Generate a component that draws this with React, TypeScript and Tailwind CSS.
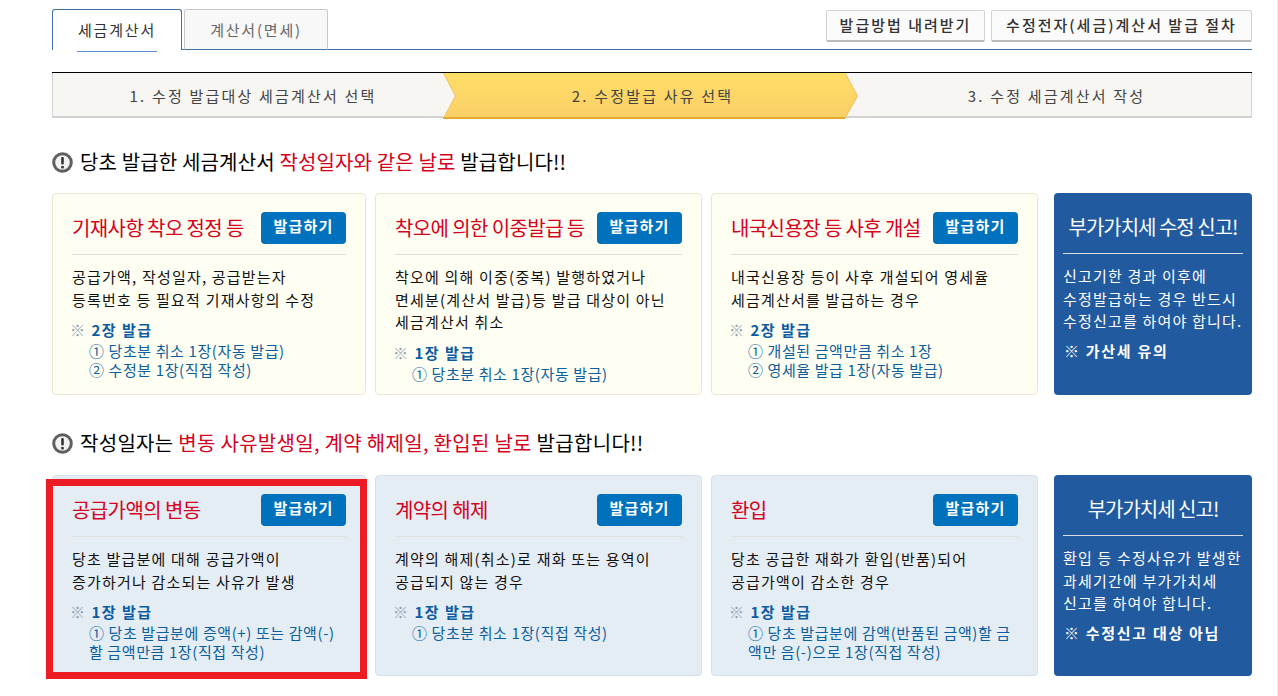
import React from "react";

type Card = {
  title: string;
  desc: string[];
  count: string;
  lines: string[];
};

const topCards: Card[] = [
  {
    title: "기재사항 착오 정정 등",
    desc: ["공급가액, 작성일자, 공급받는자", "등록번호 등 필요적 기재사항의 수정"],
    count: "2장 발급",
    lines: ["① 당초분 취소 1장(자동 발급)", "② 수정분 1장(직접 작성)"],
  },
  {
    title: "착오에 의한 이중발급 등",
    desc: [
      "착오에 의해 이중(중복) 발행하였거나",
      "면세분(계산서 발급)등 발급 대상이 아닌",
      "세금계산서 취소",
    ],
    count: "1장 발급",
    lines: ["① 당초분 취소 1장(자동 발급)"],
  },
  {
    title: "내국신용장 등 사후 개설",
    desc: ["내국신용장 등이 사후 개설되어 영세율", "세금계산서를 발급하는 경우"],
    count: "2장 발급",
    lines: ["① 개설된 금액만큼 취소 1장", "② 영세율 발급 1장(자동 발급)"],
  },
];

const bottomCards: Card[] = [
  {
    title: "공급가액의 변동",
    desc: ["당초 발급분에 대해 공급가액이", "증가하거나 감소되는 사유가 발생"],
    count: "1장 발급",
    lines: ["① 당초 발급분에 증액(+) 또는 감액(-)", "할 금액만큼 1장(직접 작성)"],
  },
  {
    title: "계약의 해제",
    desc: ["계약의 해제(취소)로 재화 또는 용역이", "공급되지 않는 경우"],
    count: "1장 발급",
    lines: ["① 당초분 취소 1장(직접 작성)"],
  },
  {
    title: "환입",
    desc: ["당초 공급한 재화가 환입(반품)되어", "공급가액이 감소한 경우"],
    count: "1장 발급",
    lines: ["① 당초 발급분에 감액(반품된 금액)할 금", "액만 음(-)으로 1장(직접 작성)"],
  },
];

function NoticeIcon() {
  return (
    <svg className="mr-[7px] shrink-0" width="21" height="21" viewBox="0 0 21 21">
      <circle cx="10.5" cy="10.5" r="8.8" fill="#f2f2f2" stroke="#5f5f5f" strokeWidth="3" />
      <rect x="9.2" y="5" width="2.6" height="7.5" rx="1" fill="#333333" />
      <rect x="9.2" y="14" width="2.6" height="2.4" fill="#333333" />
    </svg>
  );
}

function ReasonCard({ card, tone }: { card: Card; tone: "yellow" | "blue" }) {
  return (
    <section
      className={`h-full whitespace-nowrap rounded-[4px] border px-[19px] pt-[18px] ${
        tone === "yellow"
          ? "border-[#ebe7cf] bg-[#fffef2]"
          : "border-[#d5e1ed] bg-[#e4ecf4]"
      }`}
    >
      <div className="flex h-[43px] items-start justify-between border-b border-[#e0e0dc]">
        <h3 className="pt-[3px] text-[20px] leading-[26px] tracking-[-0.6px] text-[#d6001c]">
          {card.title}
        </h3>
        <button
          className="h-[32px] w-[85px] rounded-[4px] bg-[#0071bc] pb-[4px] text-[15px] font-bold tracking-[1.2px] text-white"
          type="button"
        >
          발급하기
        </button>
      </div>
      <div className="mt-[11px] text-[15px] leading-[22.5px] tracking-[1.2px] text-[#111111]">
        {card.desc.map((line) => (
          <p key={line}>{line}</p>
        ))}
      </div>
      <p className="-ml-[2px] mt-[8px] text-[15px] font-bold leading-[22px] tracking-[1.5px] text-[#0b5ca3]">
        <span className="font-normal text-[#8fa3b5]">※</span> {card.count}
      </p>
      <div className="pl-[17px] text-[15px] leading-[19px] tracking-[0.6px] text-[#0b5f9e]">
        {card.lines.map((line) => (
          <p key={line}>{line}</p>
        ))}
      </div>
    </section>
  );
}

function SideCard({ title, desc, note }: { title: string; desc: string[]; note: string }) {
  return (
    <aside className="h-full whitespace-nowrap rounded-[4px] bg-[#225a9f] px-[9px] pt-[19px] text-white">
      <h3 className="border-b border-[#d8dde6] pb-[11px] text-center text-[20px] leading-[30px] tracking-[-1px]">
        {title}
      </h3>
      <div className="mt-[11px] text-[15px] leading-[22.5px] tracking-[1.2px]">
        {desc.map((line) => (
          <p key={line}>{line}</p>
        ))}
      </div>
      <p className="mt-[7px] pl-[1px] text-[15px] font-bold leading-[22px] tracking-[1.7px]">{note}</p>
    </aside>
  );
}

function Step({ label }: { label: string }) {
  return <span className="relative text-[15px] tracking-[2.2px] text-[#444444]">{label}</span>;
}

export default function App() {
  return (
    <div
      className="relative h-[696px] w-[1278px] overflow-hidden border-r border-r-[#e8e8e8] bg-white"
      style={{ fontFamily: '"Noto Sans CJK KR", "Liberation Sans", sans-serif' }}
    >
      <div className="mx-[52px] w-[1200px] pt-[9px]">
        <div className="flex h-[41px] justify-between border-b border-[#3f72a8]">
          <div className="flex gap-[2px]">
            <div className="z-10 flex h-[41px] w-[130px] items-start justify-center rounded-t-[3px] border border-b-0 border-[#3f72a8] bg-white pt-[9px]">
              <span className="border-b border-[#5f90c8] px-[1px] pb-[10px] text-[15px] leading-[22px] tracking-[1.8px] text-[#333333]">
                세금계산서
              </span>
            </div>
            <div className="flex h-[41px] w-[144px] items-start justify-center rounded-t-[3px] border border-[#c8c8c8] border-b-[#3f72a8] bg-[#f8f8f8] pt-[9px]">
              <span className="text-[15px] leading-[22px] tracking-[1.8px] text-[#666666]">계산서(면세)</span>
            </div>
          </div>
          <div className="flex gap-[6px] pt-[1px]">
            <button
              className="h-[32px] w-[159px] rounded-[2px] border border-[#d4d4d4] border-b-2 border-b-[#bbbbbb] bg-[#fbfbfb] text-[15px] font-medium tracking-[2px] text-[#333333]"
              type="button"
            >
              발급방법 내려받기
            </button>
            <button
              className="h-[32px] w-[261px] rounded-[2px] border border-[#d4d4d4] border-b-2 border-b-[#bbbbbb] bg-[#fbfbfb] text-[15px] font-medium tracking-[2px] text-[#333333]"
              type="button"
            >
              수정전자(세금)계산서 발급 절차
            </button>
          </div>
        </div>

        <div className="mt-[22px] flex h-[46px] border-t border-t-black">
          <div className="flex h-[45px] w-[391px] items-center justify-center border-b-2 border-l border-[#d2d2d2] bg-[#f7f6f2] pl-[10px] pt-[3px]">
            <Step label="1. 수정 발급대상 세금계산서 선택" />
          </div>
          <div className="relative z-10 flex h-[46px] w-[415px] items-center justify-center pl-[4px]">
            <svg className="absolute inset-0" width="415" height="46" viewBox="0 0 415 46">
              <defs>
                <linearGradient id="stepFill" x1="0" y1="0" x2="0" y2="1">
                  <stop offset="0" stopColor="#ffde66" />
                  <stop offset="1" stopColor="#f9cf68" />
                </linearGradient>
              </defs>
              <polygon points="0,0 13,23 0,44" fill="#f7f6f2" />
              <polygon points="0.5,0 402,0 414.5,23 402,45.5 0.5,45.5 12.5,23" fill="url(#stepFill)" />
              <polyline points="0.5,0 12.5,23 0.5,45" fill="none" stroke="#eebf58" strokeWidth="1" />
              <polyline points="402,0 414.5,23 402,45" fill="none" stroke="#eebf58" strokeWidth="1" />
              <line x1="0" y1="45" x2="402" y2="45" stroke="#e3aa2c" strokeWidth="2" />
            </svg>
            <Step label="2. 수정발급 사유 선택" />
          </div>
          <div className="-ml-[12px] flex h-[45px] flex-1 items-center justify-center border-b-2 border-r border-[#d2d2d2] bg-[#f7f6f2] pl-[16px] pt-[3px]">
            <Step label="3. 수정 세금계산서 작성" />
          </div>
        </div>

        <h2 className="mt-[29px] flex h-[30px] items-center whitespace-nowrap text-[20px] tracking-[0.15px] text-black">
          <NoticeIcon />
          <span>
            당초 발급한 세금계산서 <span className="text-[#d6001c]">작성일자와 같은 날로</span> 발급합니다!!
          </span>
        </h2>

        <div className="mt-[16px] grid h-[202px] grid-cols-[314px_327px_327px_205px] gap-x-[9px]">
          {topCards.map((card) => (
            <ReasonCard card={card} tone="yellow" key={card.title} />
          ))}
          <div className="ml-[7px]">
            <SideCard
              title="부가가치세 수정 신고!"
              desc={["신고기한 경과 이후에", "수정발급하는 경우 반드시", "수정신고를 하여야 합니다."]}
              note="※ 가산세 유의"
            />
          </div>
        </div>

        <h2 className="mt-[33px] flex h-[30px] items-center whitespace-nowrap text-[20px] tracking-[0.3px] text-black">
          <NoticeIcon />
          <span>
            작성일자는 <span className="text-[#d6001c]">변동 사유발생일, 계약 해제일, 환입된 날로</span> 발급합니다!!
          </span>
        </h2>

        <div className="mt-[17px] grid h-[201px] grid-cols-[314px_327px_327px_205px] gap-x-[9px]">
          {bottomCards.map((card) => (
            <ReasonCard card={card} tone="blue" key={card.title} />
          ))}
          <div className="ml-[7px]">
            <SideCard
              title="부가가치세 신고!"
              desc={["환입 등 수정사유가 발생한", "과세기간에 부가가치세", "신고를 하여야 합니다."]}
              note="※ 수정신고 대상 아님"
            />
          </div>
        </div>
      </div>

      {/* red highlight drawn over the first card of the second row */}
      <div className="pointer-events-none absolute left-[46px] top-[479px] h-[200px] w-[321px] border-[7px] border-[#ed1c24]" />
    </div>
  );
}
